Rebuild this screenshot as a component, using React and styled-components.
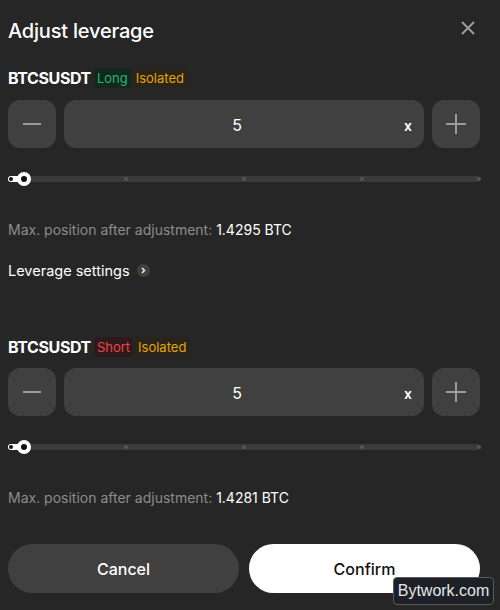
import React from 'react'
import styled, { createGlobalStyle } from 'styled-components'

const GlobalStyle = createGlobalStyle`
  html, body {
    margin: 0;
    padding: 0;
    background: #262626;
  }
  body {
    font-family: Inter, "Open Sans", sans-serif;
    color: #fff;
  }
`

const Modal = styled.div`
  position: relative;
  width: 500px;
  height: 610px;
  box-sizing: border-box;
  padding: 14px 20px 0 8px;
  background: #262626;
  display: flex;
  flex-direction: column;
`

const Header = styled.div`
  display: flex;
  align-items: center;
  justify-content: space-between;
  height: 34px;
`

const Title = styled.h1`
  margin: 0;
  font-size: 20px;
  font-weight: 500;
  letter-spacing: -0.2px;
  color: #fff;
`

const CloseButton = styled.button`
  border: none;
  background: none;
  padding: 0;
  margin-right: 5px;
  margin-top: -6px;
  display: flex;
  cursor: pointer;
`

const Section = styled.div`
  display: flex;
  flex-direction: column;
  margin-top: ${p => p.$top}px;
`

const SymbolRow = styled.div`
  display: flex;
  align-items: center;
  gap: 2px;
  height: 22px;
`

const Symbol = styled.span`
  font-size: 16px;
  font-weight: 700;
  letter-spacing: -0.4px;
  margin-right: 1px;
`

const Tag = styled.span`
  font-size: 13px;
  line-height: 20px;
  padding: 0 3px;
  border-radius: 4px;
  color: ${p => p.$color};
  background: ${p => p.$bg};
`

const Stepper = styled.div`
  display: flex;
  gap: 8px;
  margin-top: ${p => p.$top}px;
`

const StepButton = styled.button`
  width: 48px;
  height: 48px;
  border: none;
  border-radius: 12px;
  background: #404040;
  display: flex;
  align-items: center;
  justify-content: center;
  padding: 0;
  cursor: pointer;
`

const ValueBox = styled.div`
  flex: 1;
  height: 48px;
  border-radius: 12px;
  background: #404040;
  display: flex;
  align-items: center;
  position: relative;
`

const Value = styled.span`
  flex: 1;
  text-align: center;
  font-size: 16px;
  padding: 2px 14px 0 0;
`

const Unit = styled.span`
  position: absolute;
  right: 12px;
  top: 17px;
  font-size: 14px;
  font-weight: 600;
`

const Slider = styled.div`
  position: relative;
  height: 16px;
  margin-top: 23px;
  display: flex;
  align-items: center;
`

const Track = styled.div`
  flex: 1;
  height: 6px;
  border-radius: 3px;
  background: #3b3b3b;
  position: relative;
`

const Fill = styled.div`
  position: absolute;
  left: 0;
  top: 0;
  bottom: 0;
  border-radius: 3px;
  background: #fff;
`

const Tick = styled.span`
  position: absolute;
  top: 1px;
  width: 4px;
  height: 4px;
  margin-left: -2px;
  border-radius: 50%;
  background: ${p => (p.$active ? '#111' : '#555')};
`

const Thumb = styled.span`
  position: absolute;
  top: 50%;
  width: 14px;
  height: 14px;
  margin: -7px 0 0 -7px;
  border-radius: 50%;
  background: #fff;
  display: flex;
  align-items: center;
  justify-content: center;
  &::after {
    content: '';
    width: 6px;
    height: 6px;
    border-radius: 50%;
    background: #111;
  }
`

const Info = styled.div`
  margin-top: 34px;
  font-size: 14px;
  color: #8c8c8c;
  letter-spacing: 0;
`

const InfoValue = styled.span`
  color: #fff;
`

const SettingsLink = styled.a`
  display: flex;
  align-items: center;
  gap: 7px;
  margin-top: 24px;
  font-size: 14.5px;
  color: #fff;
  cursor: pointer;
`

const ChevronBadge = styled.span`
  width: 13px;
  height: 13px;
  border-radius: 50%;
  background: #404040;
  display: flex;
  align-items: center;
  justify-content: center;
`

const Footer = styled.div`
  display: grid;
  grid-template-columns: 1fr 1fr;
  gap: 10px;
  margin-top: 38px;
`

const ActionButton = styled.button`
  height: 49px;
  border: none;
  border-radius: 25px;
  font-family: inherit;
  font-size: 16px;
  font-weight: 500;
  background: ${p => (p.$primary ? '#fff' : '#404040')};
  color: ${p => (p.$primary ? '#111' : '#fff')};
  cursor: pointer;
`

const Watermark = styled.div`
  position: absolute;
  left: 393px;
  top: 577px;
  width: 101px;
  height: 28px;
  box-sizing: border-box;
  border: 1px solid #5a5a5a;
  border-radius: 4px;
  background: #1d2026;
  color: #e6e6e6;
  font-family: "Liberation Sans", Arial, sans-serif;
  font-size: 16px;
  display: flex;
  align-items: center;
  justify-content: center;
`

const ticks = [0, 25, 50, 75, 100]

const LeverageSlider = ({ percent }) => (
  <Slider>
    <Track>
      <Fill style={{ width: `calc(${percent}% + 16px)` }} />
      {ticks.map(t => (
        <Tick key={t} $active={t === 0} style={{ left: t === 0 ? '3px' : `calc(${t}% - ${t === 100 ? 1 : 0}px)` }} />
      ))}
      <Thumb style={{ left: '16px' }} />
    </Track>
  </Slider>
)

const LeverageBlock = ({ side, value, position, top, gap }) => (
  <Section $top={top}>
    <SymbolRow>
      <Symbol>BTCSUSDT</Symbol>
      {side === 'Long' ? (
        <Tag $color="#22b573" $bg="#13271f">Long</Tag>
      ) : (
        <Tag $color="#ef4444" $bg="#2e1a1c">Short</Tag>
      )}
      <Tag $color="#e7a400" $bg="#29251a">Isolated</Tag>
    </SymbolRow>
    <Stepper $top={gap}>
      <StepButton aria-label="decrease">
        <svg width="20" height="20" viewBox="0 0 20 20">
          <path d="M1 10h18" stroke="#9a9a9a" strokeWidth="2" />
        </svg>
      </StepButton>
      <ValueBox>
        <Value>{value}</Value>
        <Unit>x</Unit>
      </ValueBox>
      <StepButton aria-label="increase">
        <svg width="22" height="22" viewBox="0 0 22 22">
          <path d="M1 11h20M11 1v20" stroke="#9a9a9a" strokeWidth="2" />
        </svg>
      </StepButton>
    </Stepper>
    <LeverageSlider percent={0} />
    <Info>
      Max. position after adjustment: <InfoValue>{position}</InfoValue>
    </Info>
  </Section>
)

const App = () => {
  return (
    <>
      <GlobalStyle />
      <Modal>
        <Header>
          <Title>Adjust leverage</Title>
          <CloseButton aria-label="close">
            <svg width="14" height="14" viewBox="0 0 14 14">
              <path d="M1 1l12 12M13 1L1 13" stroke="#a0a0a0" strokeWidth="1.8" />
            </svg>
          </CloseButton>
        </Header>
        <LeverageBlock side="Long" value="5" position="1.4295 BTC" top={19} gap={11} />
        <SettingsLink>
          Leverage settings
          <ChevronBadge>
            <svg width="7" height="7" viewBox="0 0 7 7">
              <path d="M2 1l2.5 2.5L2 6" stroke="#fff" strokeWidth="1.4" fill="none" />
            </svg>
          </ChevronBadge>
        </SettingsLink>
        <LeverageBlock side="Short" value="5" position="1.4281 BTC" top={57} gap={10} />
        <Footer>
          <ActionButton>Cancel</ActionButton>
          <ActionButton $primary>Confirm</ActionButton>
        </Footer>
        <Watermark>Bytwork.com</Watermark>
      </Modal>
    </>
  )
}

export default App
